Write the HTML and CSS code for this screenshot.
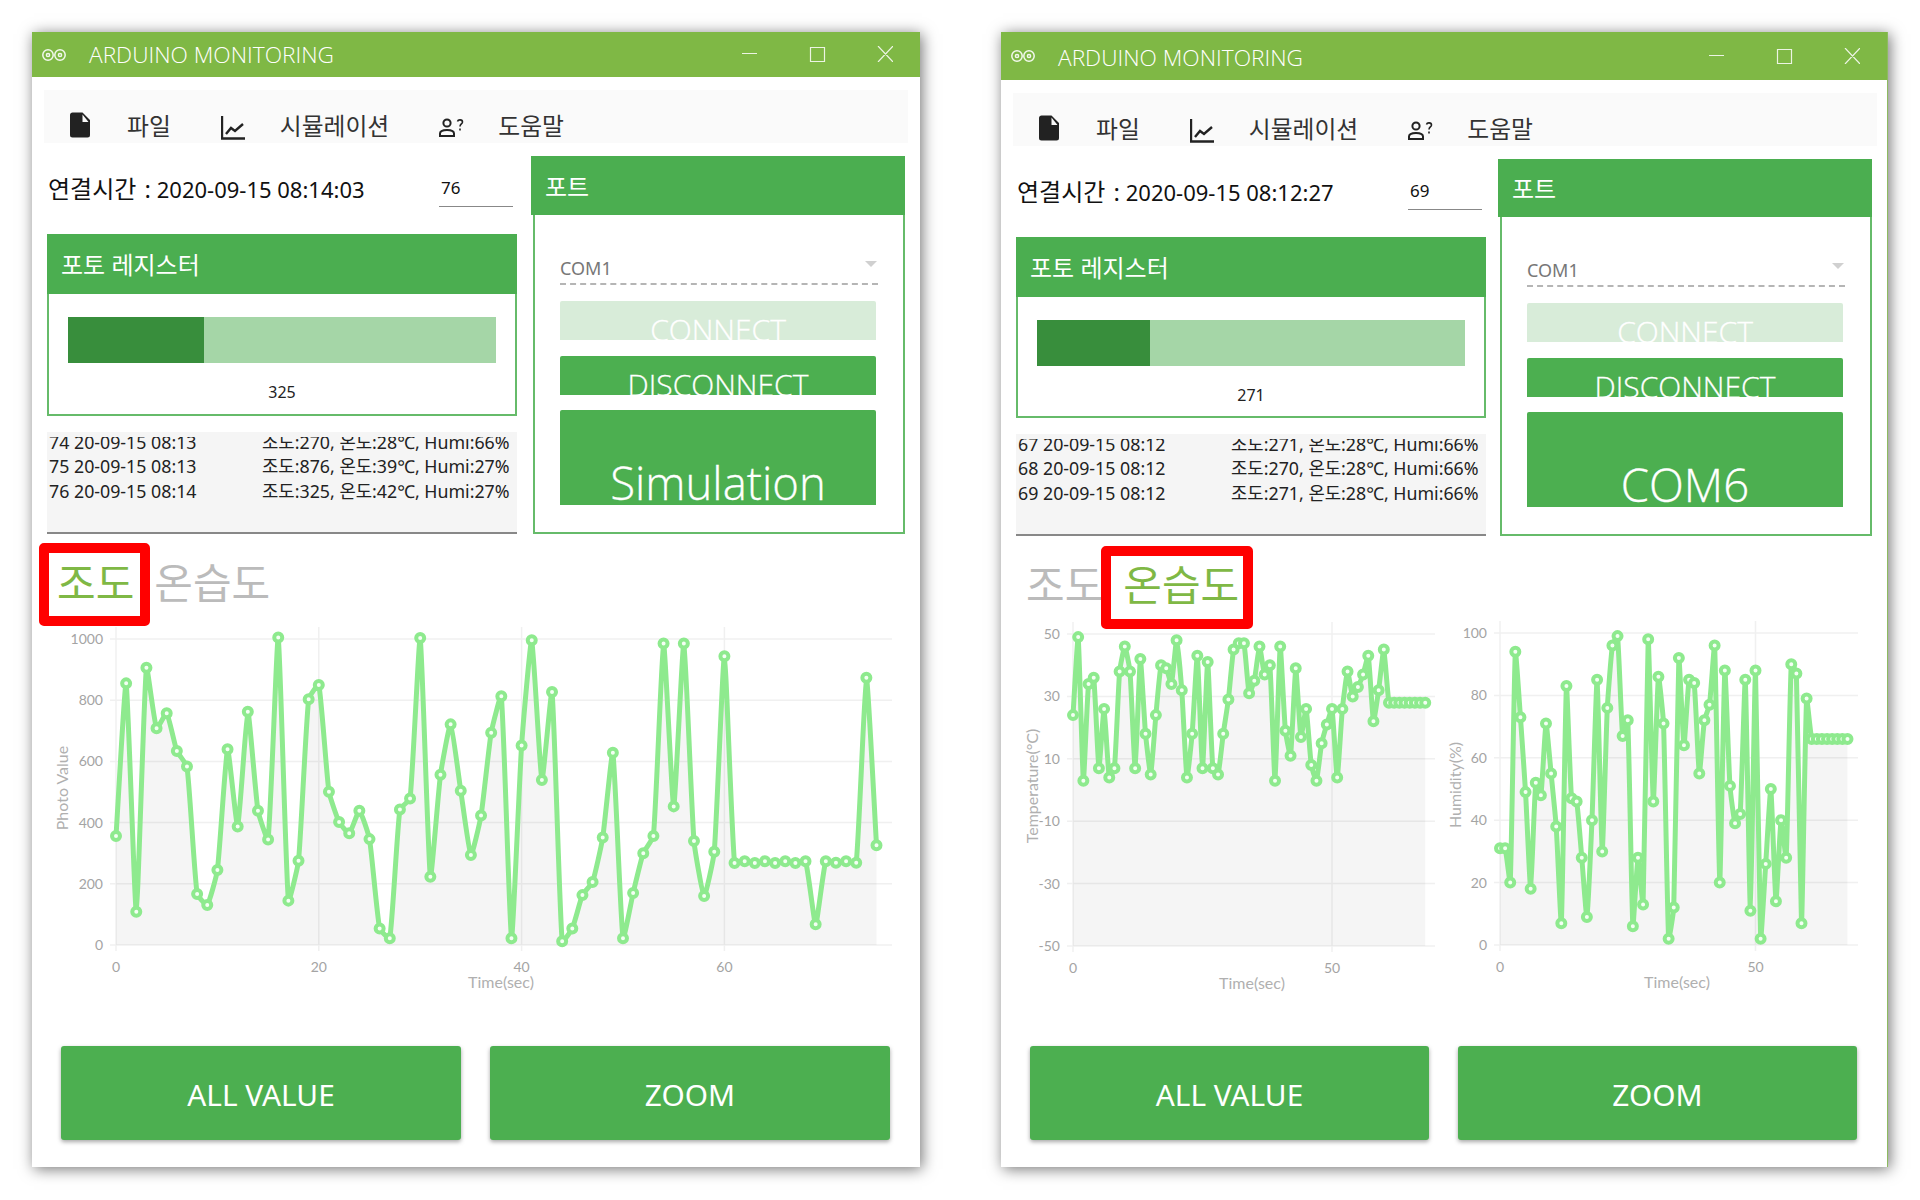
FILE: index.html
```html
<!DOCTYPE html>
<html lang="ko">
<head>
  <meta charset="UTF-8">
  <title>Arduino Monitoring</title>
  <link rel="stylesheet" href="styles.css">
</head>
<body>
  <div class="window win-a">
    <div class="titlebar">
      <svg class="logo" viewBox="0 0 24 12"><circle cx="6" cy="6" r="5.2"/><circle cx="18" cy="6" r="5.2"/><circle cx="6" cy="6" r="1.6"/><circle cx="18" cy="6" r="1.6"/></svg>
      <span class="title">ARDUINO MONITORING</span>
      <svg class="caption" viewBox="0 0 151 16"><path d="M0 7.5h15M68.5 1.5h14v14h-14zM136 0l15 16M151 0l-15 16"/></svg>
    </div>
    <div class="menu">
      <svg class="icon-doc" viewBox="0 0 24 24"><path d="M14 9.5V3.5L18.8 9.5M6 2C4.9 2 4 2.9 4 4V20A2 2 0 0 0 6 22H18A2 2 0 0 0 20 20V8L14 2H6Z"/></svg>
      <span class="menu-label m-file">파일</span>
      <svg class="icon-chart" viewBox="0 0 24 25"><path d="M1 1V23.5H24M5 19L10 13L14 16L22 9"/></svg>
      <span class="menu-label m-sim">시뮬레이션</span>
      <svg class="icon-help" viewBox="0 0 25 19"><circle cx="8" cy="5" r="3.6"/><path d="M1 18v-2.5c0-2.4 3.2-3.600 7-3.600s7 1.200 7 3.600V18z"/><path class="q" d="M18.500 3.500c.6-2.300 5-2.200 5 .5 0 2-2.500 2-2.500 4.500M21 10.500v2"/></svg>
      <span class="menu-label m-help">도움말</span>
    </div>
    <div class="columns">
      <div class="left-col">
        <div class="time-row">
          <span class="time"><span class="time-label">연결시간 :</span> 2020-09-15 08:14:03</span>
          <span class="count">76</span>
        </div>
        <div class="panel-head">포토 레지스터</div>
        <div class="panel-body photo-body">
          <div class="progress"><div class="progress-fill" style="width: 31.8%"></div></div>
          <div class="progress-value">325</div>
        </div>
        <div class="log">
          <div class="log-list">
            <div class="log-row"><span>74 20-09-15 08:13</span><span>조도:270, 온도:28℃, Humi:66%</span></div>
            <div class="log-row"><span>75 20-09-15 08:13</span><span>조도:876, 온도:39℃, Humi:27%</span></div>
            <div class="log-row"><span>76 20-09-15 08:14</span><span>조도:325, 온도:42℃, Humi:27%</span></div>
          </div>
        </div>
      </div>
      <div class="port">
        <div class="panel-head">포트</div>
        <div class="panel-body port-body">
          <div class="select"><span>COM1</span><i class="arrow"></i></div>
          <div class="btn-small btn-disabled">CONNECT</div>
          <div class="btn-small">DISCONNECT</div>
          <div class="btn-big">Simulation</div>
        </div>
      </div>
    </div>
    <div class="tabs">
      <span class="tab tab-on">조도</span>
      <span class="tab">온습도</span>
      <div class="mark"></div>
    </div>
    <div class="charts">
      <svg id="chartPhoto" class="chart-wide"></svg>
    </div>
    <div class="actions">
      <div class="btn-action">ALL VALUE</div>
      <div class="btn-action">ZOOM</div>
    </div>
  </div>

  <div class="window win-b">
    <div class="titlebar">
      <svg class="logo" viewBox="0 0 24 12"><circle cx="6" cy="6" r="5.2"/><circle cx="18" cy="6" r="5.2"/><circle cx="6" cy="6" r="1.6"/><circle cx="18" cy="6" r="1.6"/></svg>
      <span class="title">ARDUINO MONITORING</span>
      <svg class="caption" viewBox="0 0 151 16"><path d="M0 7.5h15M68.5 1.5h14v14h-14zM136 0l15 16M151 0l-15 16"/></svg>
    </div>
    <div class="menu">
      <svg class="icon-doc" viewBox="0 0 24 24"><path d="M14 9.5V3.5L18.8 9.5M6 2C4.9 2 4 2.9 4 4V20A2 2 0 0 0 6 22H18A2 2 0 0 0 20 20V8L14 2H6Z"/></svg>
      <span class="menu-label m-file">파일</span>
      <svg class="icon-chart" viewBox="0 0 24 25"><path d="M1 1V23.5H24M5 19L10 13L14 16L22 9"/></svg>
      <span class="menu-label m-sim">시뮬레이션</span>
      <svg class="icon-help" viewBox="0 0 25 19"><circle cx="8" cy="5" r="3.6"/><path d="M1 18v-2.5c0-2.4 3.2-3.600 7-3.600s7 1.200 7 3.600V18z"/><path class="q" d="M18.500 3.500c.6-2.300 5-2.200 5 .5 0 2-2.500 2-2.500 4.500M21 10.500v2"/></svg>
      <span class="menu-label m-help">도움말</span>
    </div>
    <div class="columns">
      <div class="left-col">
        <div class="time-row">
          <span class="time"><span class="time-label">연결시간 :</span> 2020-09-15 08:12:27</span>
          <span class="count">69</span>
        </div>
        <div class="panel-head">포토 레지스터</div>
        <div class="panel-body photo-body">
          <div class="progress"><div class="progress-fill" style="width: 26.3%"></div></div>
          <div class="progress-value">271</div>
        </div>
        <div class="log">
          <div class="log-list">
            <div class="log-row"><span>67 20-09-15 08:12</span><span>조도:271, 온도:28℃, Humi:66%</span></div>
            <div class="log-row"><span>68 20-09-15 08:12</span><span>조도:270, 온도:28℃, Humi:66%</span></div>
            <div class="log-row"><span>69 20-09-15 08:12</span><span>조도:271, 온도:28℃, Humi:66%</span></div>
          </div>
        </div>
      </div>
      <div class="port">
        <div class="panel-head">포트</div>
        <div class="panel-body port-body">
          <div class="select"><span>COM1</span><i class="arrow"></i></div>
          <div class="btn-small btn-disabled">CONNECT</div>
          <div class="btn-small">DISCONNECT</div>
          <div class="btn-big">COM6</div>
        </div>
      </div>
    </div>
    <div class="tabs">
      <span class="tab">조도</span>
      <span class="tab tab-on">온습도</span>
      <div class="mark"></div>
    </div>
    <div class="charts">
      <svg id="chartTemp" class="chart-half"></svg>
      <svg id="chartHumi" class="chart-half"></svg>
    </div>
    <div class="actions">
      <div class="btn-action">ALL VALUE</div>
      <div class="btn-action">ZOOM</div>
    </div>
  </div>

  <script src="charts.js"></script>
</body>
</html>
```

FILE: styles.css
```css
* {
  box-sizing: border-box;
}
body {
  margin: 0;
  min-height: 1200px;
  padding: 32px 0 0 32px;
  display: flex;
  align-items: flex-start;
  gap: 81px;
  background: #fff;
  color: #222;
  font-family: "Noto Sans", "Noto Sans CJK KR", sans-serif;
}
.window {
  width: 888px;
  height: 1135px;
  background: #fff;
  box-shadow: 2px 2px 14px rgba(0, 0, 0, 0.55);
  display: flex;
  flex-direction: column;
  align-items: flex-start;
  flex-shrink: 0;
}
.win-b {
  width: 887px;
  border-right: 1px solid #8dbb60;
}

/* title bar */
.titlebar {
  width: 100%;
  height: 45px;
  background: #7fb845;
  display: flex;
  align-items: center;
  color: #fff;
  padding-left: 10px;
  flex-shrink: 0;
}
.win-b .titlebar {
  height: 48px;
}
.logo {
  width: 24px;
  height: 12px;
  fill: none;
  stroke: #fff;
  stroke-width: 1.5;
  opacity: 0.9;
}
.title {
  margin-left: 23px;
  font-family: "Open Sans", "Noto Sans", sans-serif;
  font-weight: 300;
  font-size: 22.7px;
}
.win-b .title {
  margin-top: 2px;
}
.caption {
  margin-left: auto;
  margin-right: 27px;
  margin-bottom: 2px;
  width: 151px;
  height: 16px;
  fill: none;
  stroke: #fff;
  stroke-width: 1.2;
  opacity: 0.85;
}
.win-b .caption {
  margin-bottom: 0;
}

/* menu */
.menu {
  margin: 13px 12px 0;
  width: 864px;
  height: 53px;
  background: #fafafa;
  position: relative;
  display: flex;
  align-items: flex-end;
  padding: 0 0 3px 26px;
  flex-shrink: 0;
}
.icon-doc {
  width: 30px;
  height: 30px;
  margin-left: -5px;
  fill: #222;
  fill-rule: evenodd;
}
.icon-chart {
  width: 24px;
  height: 25px;
  fill: none;
  stroke: #222;
  stroke-width: 2.4;
}
.icon-help {
  width: 25px;
  height: 19px;
  margin-bottom: 3px;
  fill: none;
  stroke: #222;
  stroke-width: 2;
}
.icon-help .q {
  stroke-width: 1.6;
}
.menu-label {
  font-size: 23.8px;
  line-height: 32px;
  margin-bottom: -2px;
  color: #333;
}
.m-file {
  margin-left: 32px;
  margin-right: 50px;
}
.m-sim {
  margin-left: 35px;
  margin-right: 50px;
}
.m-help {
  margin-left: 34px;
}

/* main columns */
.columns {
  margin: 13px 0 0 15px;
  display: flex;
  gap: 14px;
  flex-shrink: 0;
}
.win-b .columns {
  gap: 12px;
}
.left-col {
  width: 470px;
}
.time-row {
  height: 78px;
  display: flex;
  position: relative;
}
.time {
  margin-left: 1px;
  padding-top: 16px;
  font-size: 22px;
  line-height: 34px;
  color: #111;
}
.time-label {
  font-size: 24px;
  word-spacing: 2px;
}
.count {
  position: absolute;
  left: 392px;
  top: 17px;
  width: 74px;
  height: 34px;
  padding-left: 2px;
  border-bottom: 1px solid #888;
  font-size: 17px;
  line-height: 29px;
  color: #111;
}
.panel-head {
  height: 60px;
  background: #4bae50;
  color: #fff;
  font-size: 24px;
  line-height: 62px;
  padding-left: 14px;
}
.panel-body {
  border: 2px solid #66bb6a;
  border-top: none;
}
.photo-body {
  height: 122px;
  padding: 23px 19px 0;
}
.win-b .photo-body {
  height: 121px;
}
.progress {
  height: 46px;
  background: #a5d6a7;
}
.progress-fill {
  height: 100%;
  background: #388e3c;
}
.progress-value {
  margin-top: 16px;
  text-align: center;
  font-size: 16px;
  line-height: 26px;
  color: #222;
}
.log {
  margin-top: 16px;
  height: 102px;
  padding-top: 5px;
  background: #f5f5f5;
  border-bottom: 2px solid #888;
}
.log-list {
  height: 95px;
  overflow: hidden;
  display: flex;
  flex-direction: column;
  justify-content: flex-end;
  padding-bottom: 29px;
}
.log-row {
  display: flex;
  height: 24.5px;
  flex-shrink: 0;
  padding-left: 2px;
  font-size: 17.8px;
  line-height: 24.5px;
  color: #222;
}
.log-row span:first-child {
  width: 213px;
}

/* port panel */
.port {
  width: 374px;
  display: flex;
  flex-direction: column;
}
.port .panel-head {
  height: 59px;
  line-height: 61px;
}
.win-b .port .panel-head {
  height: 58px;
  line-height: 60px;
}
.port-body {
  margin-left: 2px;
  height: 319px;
  padding: 36px 27px 0 25px;
  display: flex;
  flex-direction: column;
}
.select {
  height: 34px;
  flex-shrink: 0;
  display: flex;
  justify-content: space-between;
  border-bottom: 2px dashed #b5b5b5;
  font-size: 18px;
  line-height: 34px;
  color: #777;
  margin-right: -2px;
}
.arrow {
  width: 0;
  height: 0;
  margin: 10px 1px 0 0;
  border-left: 6px solid transparent;
  border-right: 6px solid transparent;
  border-top: 6px solid #d0d0d0;
}
.btn-small, .btn-big {
  background: #4caf50;
  color: #fff;
  text-align: center;
  overflow: hidden;
  border-radius: 2px 2px 0 0;
  font-family: "Open Sans", "Noto Sans", sans-serif;
  font-weight: 300;
  -webkit-text-stroke: 0.3px #fff;
  flex-shrink: 0;
}
.btn-small {
  margin-top: 16px;
  height: 39px;
  padding-top: 12px;
  font-size: 30px;
  line-height: 34px;
}
.btn-disabled {
  background: #d8ecd9;
}
.btn-big {
  margin-top: 15px;
  height: 95px;
  padding-top: 41px;
  font-size: 45.5px;
  line-height: 62px;
}

/* tabs */
.tabs {
  margin-left: 25px;
  height: 86px;
  display: flex;
  gap: 20px;
  position: relative;
  flex-shrink: 0;
}
.win-b .tabs {
  height: 84px;
}
.tab {
  font-size: 42px;
  line-height: 46px;
  margin-top: 26px;
  color: #bbb;
}
.tab-on {
  color: #7fb845;
}
.mark {
  position: absolute;
  top: 9px;
  left: -18px;
  width: 111px;
  height: 83px;
  border: 10px solid #f00;
  border-radius: 5px;
}
.win-b .mark {
  top: 10px;
  left: 75px;
  width: 152px;
}

/* charts */
.charts {
  margin-left: 18px;
  height: 380px;
  display: flex;
  flex-shrink: 0;
}
.chart-wide {
  width: 850px;
  height: 380px;
}
.chart-half {
  width: 425px;
  height: 380px;
}
.chart-grid {
  stroke: #f0f0f0;
  stroke-width: 1.5;
}
.chart-fill {
  fill: rgba(0, 0, 0, 0.04);
}
.chart-line {
  fill: none;
  stroke: #8eea8e;
  stroke-width: 5;
}
.chart-point {
  fill: #f4fff4;
  stroke: #8eea8e;
  stroke-width: 4;
}
.chart-text {
  font-family: Lato, sans-serif;
  font-size: 14px;
  fill: #a4a4a4;
}
.chart-title {
  font-size: 16px;
  fill: #b0b0b0;
}

/* bottom buttons */
.actions {
  margin: 46px 0 0 29px;
  display: flex;
  gap: 29px;
  flex-shrink: 0;
}
.btn-action {
  width: 400px;
  height: 94px;
  background: #4caf50;
  border-radius: 3px;
  box-shadow: 0 2px 4px rgba(0, 0, 0, 0.35);
  color: #fff;
  font-size: 29.8px;
  line-height: 97px;
  text-align: center;
}
.win-b .btn-action {
  width: 399px;
}
```

FILE: charts.js
```js
const SVG_NS = "http://www.w3.org/2000/svg";

const photoData = [356, 855, 109, 906, 708, 757, 634, 583, 167, 131, 245, 640, 387, 762, 439, 345,
  1005, 145, 275, 803, 850, 501, 402, 365, 439, 346, 54, 22, 443, 479, 1003, 223, 556, 721, 504, 294,
  423, 694, 813, 22, 652, 996, 539, 827, 12, 54, 163, 206, 351, 628, 22, 170, 300, 356, 985, 453, 985,
  340, 160, 305, 944, 268, 274, 268, 274, 268, 274, 268, 274, 68, 274, 269, 274, 269, 873, 326];

const tempData = [24, 49, 3, 34, 36, 7, 26, 4, 7, 38, 46, 38, 7, 42, 18, 5, 24, 40, 39, 34, 48, 32, 4, 18,
  43, 7, 41, 7, 5, 18, 29, 45, 47, 47, 31, 35, 46, 37, 40, 3, 46, 19, 11, 39, 17, 26, 8, 3, 15, 21, 26,
  4, 26, 38, 30, 33, 37, 43, 22, 32, 45, 28, 28, 28, 28, 28, 28, 28, 28];

const humiData = [31, 31, 20, 94, 73, 49, 18, 52, 48, 71, 55, 38, 7, 83, 47, 46, 28, 9, 40, 85, 30, 76, 96,
  99, 67, 72, 6, 28, 13, 98, 46, 86, 71, 2, 12, 92, 64, 85, 84, 55, 72, 77, 96, 20, 88, 51, 39, 42, 85, 11,
  88, 2, 26, 50, 14, 40, 28, 90, 87, 7, 79, 66, 66, 66, 66, 66, 66, 66, 66];

function el(parent, name, attrs, text) {
  const node = document.createElementNS(SVG_NS, name);
  for (const key in attrs) node.setAttribute(key, attrs[key]);
  if (text !== undefined) node.textContent = text;
  parent.appendChild(node);
  return node;
}

// same curve as a chart.js line with a low tension
function linePath(pts, tension) {
  let d = "M" + pts[0].x + " " + pts[0].y;
  const cps = pts.map((p, i) => {
    const prev = pts[Math.max(i - 1, 0)];
    const next = pts[Math.min(i + 1, pts.length - 1)];
    const d01 = Math.hypot(p.x - prev.x, p.y - prev.y);
    const d12 = Math.hypot(next.x - p.x, next.y - p.y);
    const sum = d01 + d12 || 1;
    const fa = tension * d01 / sum;
    const fb = tension * d12 / sum;
    return {
      inX: p.x - fa * (next.x - prev.x), inY: p.y - fa * (next.y - prev.y),
      outX: p.x + fb * (next.x - prev.x), outY: p.y + fb * (next.y - prev.y)
    };
  });
  for (let i = 1; i < pts.length; i++) {
    d += " C" + cps[i - 1].outX + " " + cps[i - 1].outY + " " + cps[i].inX + " " + cps[i].inY + " " + pts[i].x + " " + pts[i].y;
  }
  return d;
}

function drawChart(id, cfg) {
  const svg = document.getElementById(id);
  const valueToY = v => cfg.bottom - (v - cfg.yMin) / (cfg.yMax - cfg.yMin) * (cfg.bottom - cfg.top);
  const indexToX = i => cfg.left + i * cfg.unit;

  cfg.yTicks.forEach(v => {
    const y = valueToY(v);
    el(svg, "line", { class: "chart-grid", x1: cfg.left - 6, x2: cfg.right, y1: y, y2: y });
    el(svg, "text", { class: "chart-text", x: cfg.left - 13, y: y + 5, "text-anchor": "end" }, v);
  });
  cfg.xTicks.forEach(v => {
    const x = indexToX(v);
    el(svg, "line", { class: "chart-grid", x1: x, x2: x, y1: cfg.top - 12, y2: cfg.bottom + 6 });
    el(svg, "text", { class: "chart-text", x: x, y: cfg.bottom + 27, "text-anchor": "middle" }, v);
  });

  const pts = cfg.data.map((v, i) => ({ x: indexToX(i), y: valueToY(v) }));
  const line = linePath(pts, 0.15);
  const last = pts[pts.length - 1];
  el(svg, "path", { class: "chart-fill", d: line + " L" + last.x + " " + cfg.bottom + " L" + cfg.left + " " + cfg.bottom + " Z" });
  el(svg, "path", { class: "chart-line", d: line });
  pts.forEach(p => el(svg, "circle", { class: "chart-point", cx: p.x, cy: p.y, r: 4 }));

  el(svg, "text", { class: "chart-text chart-title", x: cfg.xLabelX, y: cfg.bottom + 43, "text-anchor": "middle" }, "Time(sec)");
  const cy = (cfg.top + cfg.bottom) / 2 - 4;
  el(svg, "text", {
    class: "chart-text chart-title", x: cfg.yLabelX, y: cy, "text-anchor": "middle",
    transform: "rotate(-90 " + cfg.yLabelX + " " + cy + ")"
  }, cfg.yLabel);
}

drawChart("chartPhoto", {
  data: photoData, yMin: 0, yMax: 1000, yTicks: [0, 200, 400, 600, 800, 1000], xTicks: [0, 20, 40, 60],
  left: 66, right: 842, top: 19, bottom: 325, unit: 10.14, xLabelX: 451, yLabelX: 18, yLabel: "Photo Value"
});
drawChart("chartTemp", {
  data: tempData, yMin: -50, yMax: 50, yTicks: [-50, -30, -10, 10, 30, 50], xTicks: [0, 50],
  left: 54, right: 416, top: 14, bottom: 326, unit: 5.18, xLabelX: 233, yLabelX: 19, yLabel: "Temperature(°C)"
});
drawChart("chartHumi", {
  data: humiData, yMin: 0, yMax: 100, yTicks: [0, 20, 40, 60, 80, 100], xTicks: [0, 50],
  left: 56, right: 414, top: 13, bottom: 325, unit: 5.11, xLabelX: 233, yLabelX: 17, yLabel: "Humidity(%)"
});
```
